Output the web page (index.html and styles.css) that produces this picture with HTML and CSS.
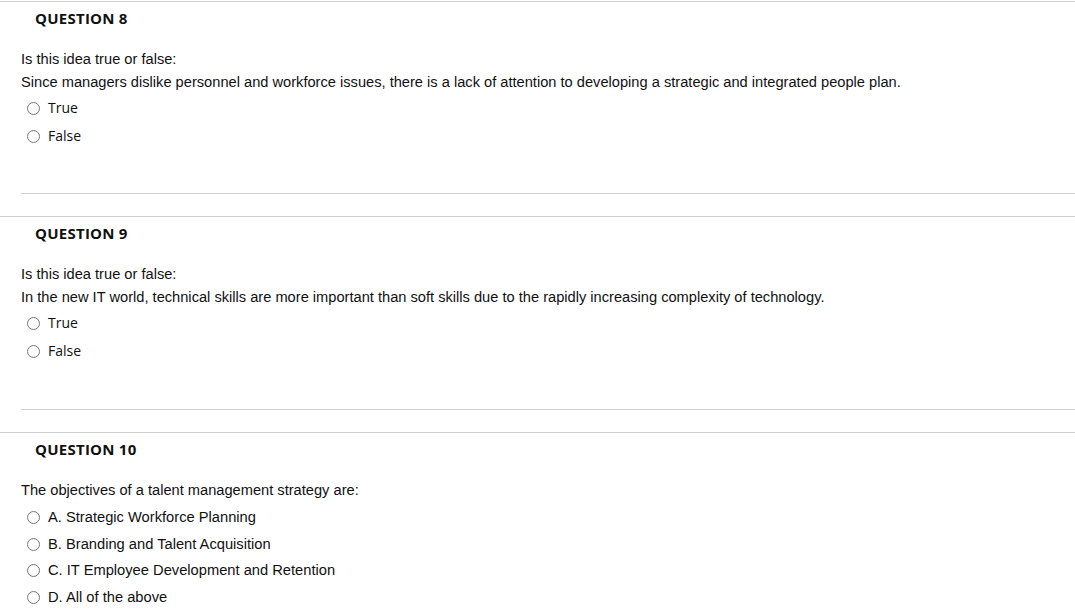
FILE: index.html
```html
<!DOCTYPE html>
<html>
<head>
<meta charset="utf-8">
<link rel="stylesheet" href="styles.css">
</head>
<body>
<div class="page">
  <section class="question first">
    <h3 class="q-title">QUESTION 8</h3>
    <div class="q-body">
      <p class="q-text">Is this idea true or false:</p>
      <p class="q-text">Since managers dislike personnel and workforce issues, there is a lack of attention to developing a strategic and integrated people plan.</p>
      <ul class="options tf">
        <li class="option"><span class="radio"></span><span class="label">True</span></li>
        <li class="option"><span class="radio"></span><span class="label">False</span></li>
      </ul>
    </div>
    <div class="q-sep"></div>
  </section>
  <section class="question">
    <h3 class="q-title">QUESTION 9</h3>
    <div class="q-body">
      <p class="q-text">Is this idea true or false:</p>
      <p class="q-text">In the new IT world, technical skills are more important than soft skills due to the rapidly increasing complexity of technology.</p>
      <ul class="options tf">
        <li class="option"><span class="radio"></span><span class="label">True</span></li>
        <li class="option"><span class="radio"></span><span class="label">False</span></li>
      </ul>
    </div>
    <div class="q-sep"></div>
  </section>
  <section class="question last">
    <h3 class="q-title">QUESTION 10</h3>
    <div class="q-body">
      <p class="q-text">The objectives of a talent management strategy are:</p>
      <ul class="options mc">
        <li class="option"><span class="radio"></span><span class="label">A. Strategic Workforce Planning</span></li>
        <li class="option"><span class="radio"></span><span class="label">B. Branding and Talent Acquisition</span></li>
        <li class="option"><span class="radio"></span><span class="label">C. IT Employee Development and Retention</span></li>
        <li class="option"><span class="radio"></span><span class="label">D. All of the above</span></li>
      </ul>
    </div>
  </section>
</div>
</body>
</html>
```
FILE: styles.css
```css
html, body {
  margin: 0;
  padding: 0;
  background: #fff;
}
body {
  font-family: Arial, "Liberation Sans", sans-serif;
  color: #111;
}
.page {
  padding-top: 1px;
}
.question {
  border-top: 1px solid #cfcfcf;
  height: 215px;
  display: flex;
  flex-direction: column;
}
.question.first {
  height: 214px;
}
.question.last {
  height: auto;
}
.q-title {
  margin: 0;
  padding: 6px 0 0 35px;
  height: 20px;
  line-height: 20px;
  font-family: "Open Sans", sans-serif;
  font-weight: 700;
  font-size: 15px;
  color: #111;
  letter-spacing: 0.25px;
}
.q-body {
  margin: 19.5px 0 0 21px;
}
.q-text {
  margin: 0;
  font-size: 14.65px;
  line-height: 23px;
}
.options {
  list-style: none;
  margin: 0;
  padding: 0;
}
.option {
  display: flex;
  align-items: center;
  gap: 8px;
  padding-left: 6px;
}
.tf .option {
  height: 28px;
}
.tf .label {
  font-family: "Open Sans", sans-serif;
  font-size: 14px;
}
.mc {
  padding-top: 2px;
}
.mc .option {
  height: 26.7px;
}
.mc .label {
  font-size: 14.7px;
}
.radio {
  width: 11px;
  height: 11px;
  border: 1px solid #777;
  border-radius: 50%;
  background: #fff;
  flex: none;
  margin-top: 1px;
}
.q-sep {
  margin: auto 0 22px 21px;
  border-top: 1px solid #cfcfcf;
}
```
